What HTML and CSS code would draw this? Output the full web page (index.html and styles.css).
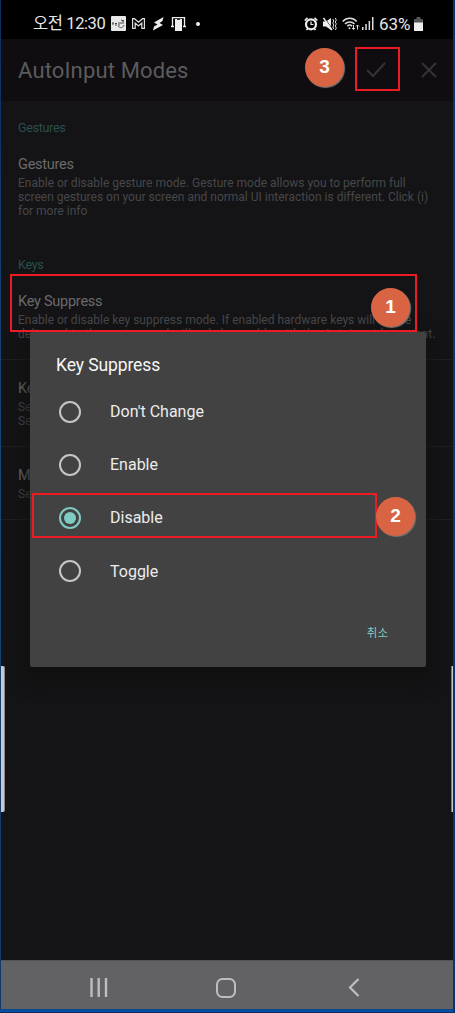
FILE: index.html
```html
<!DOCTYPE html>
<html lang="ko">
<head>
  <meta charset="UTF-8">
  <meta name="viewport" content="width=device-width, initial-scale=1.0">
  <title>AutoInput Modes</title>
  <link rel="stylesheet" href="styles.css">
</head>
<body>
  <div class="phone">
    <header class="status-bar">
      <span class="clock">오전 12:30</span>
      <svg class="icon-card" width="15" height="15" viewBox="0 0 15 15">
        <rect width="15" height="15" rx="1" fill="#e8e8e8"/>
        <path d="M1 7h2M2 7v2M4 7.500h2M4 9h2M7 7h2M7 9h2M10 6v2M12 4v4M10 4l3 1" stroke="#444" fill="none"/>
        <path d="M7 10c2 2.500 5 2 6-1" stroke="#555" fill="none"/>
      </svg>
      <svg class="icon-mail" width="13" height="11" viewBox="0 0 13 11" fill="none" stroke="#ddd" stroke-width="1.200">
        <path d="M.6 10.400V.700h1.900l4 3.600 4-3.600h1.900v9.700H9.800V5L6.500 7.900 3.200 5v5.400z"/>
      </svg>
      <svg class="icon-bolt" width="11" height="14" viewBox="0 0 11 14" fill="#eee">
        <path d="M10.500 0 1 5.500 4.500 7.500 1 9.500 0 13.500 10 8 6.500 6 9.500 4z"/>
      </svg>
      <svg class="icon-device" width="15" height="14" viewBox="0 0 15 14">
        <path d="M1.500 9V.700h12V9M0 9.500h3M12 9.500h3" stroke="#eee" stroke-width="1.300" fill="none"/>
        <path d="M4 2h7v12H4z" fill="#eee"/>
        <path d="M6 2.500h3" stroke="#333"/>
      </svg>
      <span class="dot"></span>
      <div class="status-right">
        <svg class="icon-alarm" width="14" height="14" viewBox="0 0 14 14" fill="none" stroke="#eee">
          <circle cx="7" cy="7.300" r="5" stroke-width="2.200"/>
          <path d="M.7 3.500 3.500.8M13.300 3.500 10.500.8M2.500 13l1.300-1.500M11.500 13l-1.300-1.500" stroke-width="1.600"/>
          <path d="M7 4.500v3h2.500" stroke-width="1.200"/>
        </svg>
        <svg class="icon-mute" width="14" height="14" viewBox="0 0 14 14">
          <path d="M0 4.500h3L8 1v12L3 9.500H0z" fill="#eee"/>
          <path d="m1.500 1 8.500 12" stroke="#000" stroke-width="1"/>
          <path d="m.5 1 8.500 12" stroke="#eee" stroke-width="1.400"/>
          <path d="m9.800 2 1 2-1 2 1 2-1 2 1 2M12.300 1l1 2-1 2 1 2-1 2 1 2-1 2" stroke="#ddd" fill="none"/>
        </svg>
        <svg class="icon-wifi" width="18" height="14" viewBox="0 0 18 14" fill="none" stroke="#ddd" stroke-width="1.500">
          <path d="M.7 4.500C4.500.3 11 .3 14.700 4.500M3 7C5.500 4.200 10 4.200 12.500 7M5.300 9.300c1.500-1.600 3.300-1.600 4.800 0"/>
          <circle cx="7.500" cy="11.200" r="1" fill="#ddd" stroke="none"/>
          <path d="M11.500 8v4.500m-1.500-1.500 1.500 1.500L13 11M15.500 12.500V8M14 9.500 15.500 8 17 9.500" stroke-width="1"/>
        </svg>
        <svg class="icon-signal" width="12" height="13" viewBox="0 0 12 13" fill="#ddd">
          <path d="M0 10h1.500v3H0zM3.300 7h1.500v6H3.300zM6.600 4h1.500v9H6.600zM10 0h1.500v13H10z"/>
        </svg>
        <span class="percent">63%</span>
        <svg class="icon-battery" width="9" height="14" viewBox="0 0 9 14">
          <path d="M2.500 0h4v2H9v4H0V2h2.500z" fill="#555"/>
          <path d="M0 5.500h9V14H0z" fill="#eee"/>
        </svg>
      </div>
    </header>

    <div class="app-bar">
      <h1>AutoInput Modes</h1>
      <svg class="icon-check" width="20" height="16" viewBox="0 0 20 16" fill="none" stroke="#343336" stroke-width="2">
        <path d="m1 8 6 6L19 1"/>
      </svg>
      <svg class="icon-close" width="16" height="16" viewBox="0 0 16 16" fill="none" stroke="#343336" stroke-width="2">
        <path d="m1 1 14 14M15 1 1 15"/>
      </svg>
    </div>

    <main class="settings">
      <section class="group gestures">
        <h2>Gestures</h2>
        <div class="setting">
          <h3>Gestures</h3>
          <p>Enable or disable gesture mode. Gesture mode allows you to perform full</p>
          <p>screen gestures on your screen and normal UI interaction is different. Click (i)</p>
          <p>for more info</p>
        </div>
      </section>
      <section class="group keys">
        <h2>Keys</h2>
        <div class="setting lined">
          <h3>Key Suppress</h3>
          <p>Enable or disable key suppress mode. If enabled hardware keys will not be</p>
          <p class="spread">delivered to the system and will only be usable with the AutoInput key event.</p>
        </div>
        <div class="setting lined">
          <h3>Keys</h3>
          <p>Set</p>
          <p>Set</p>
        </div>
        <div class="setting lined">
          <h3>Mode</h3>
          <p>Set</p>
        </div>
      </section>
    </main>

    <nav class="nav-bar">
      <svg width="18" height="19" viewBox="0 0 18 19" stroke="#bebebe" stroke-width="2.400">
        <path d="M1.500 0v19M8.700 0v19M16 0v19"/>
      </svg>
      <svg class="icon-home" width="20" height="20" viewBox="0 0 20 20" fill="none" stroke="#bebebe" stroke-width="2">
        <rect x="1" y="1" width="18" height="18" rx="5.500"/>
      </svg>
      <svg width="12" height="19" viewBox="0 0 12 19" fill="none" stroke="#bebebe" stroke-width="2.200">
        <path d="M10.500 1 2 9.500l8.500 8.500"/>
      </svg>
    </nav>

    <div class="edge edge-left"></div>
    <div class="edge edge-right"></div>

    <div class="dialog">
      <h2>Key Suppress</h2>
      <ul>
        <li><span class="radio"></span>Don't Change</li>
        <li><span class="radio"></span>Enable</li>
        <li><span class="radio checked"></span>Disable</li>
        <li><span class="radio"></span>Toggle</li>
      </ul>
      <button class="cancel">취소</button>
    </div>

    <div class="mark mark-suppress"></div>
    <div class="mark mark-disable"></div>
    <div class="mark mark-check"></div>
    <div class="step step-one">1</div>
    <div class="step step-two">2</div>
    <div class="step step-three">3</div>
  </div>
</body>
</html>
```
FILE: styles.css
```css
* {
  box-sizing: border-box;
  margin: 0;
  padding: 0;
}
body {
  width: 455px;
  height: 1013px;
  padding: 0 0 4px 1px;
  overflow: hidden;
  background: linear-gradient(#0c2d5c 0, #123d70 25%, #164873 50%, #0f3a68 95%, #0f3a68 1009px, #0750a4 1010px, #0750a4 1012px, #082c5c 1012px);
  border-right: 2px solid #10316f;
  font-family: Roboto, "Noto Sans CJK KR", sans-serif;
}
h1, h2, h3 {
  font-weight: 400;
}
svg {
  flex: none;
  display: block;
}
.phone {
  position: relative;
  width: 452px;
  height: 1009px;
  display: flex;
  flex-direction: column;
  background: #141416;
}

/* status bar */
.status-bar {
  height: 39px;
  padding: 8px 30px 0 32px;
  display: flex;
  align-items: center;
  background: #000;
  color: #e6e6e6;
  font-size: 17px;
  white-space: nowrap;
}
.clock {
  width: 78px;
  font-size: 16.500px;
  line-height: 24px;
  letter-spacing: -0.400px;
}
.icon-mail {
  margin-left: 6px;
}
.icon-bolt {
  margin-left: 8px;
}
.icon-device {
  margin-left: 7px;
}
.dot {
  width: 4px;
  height: 4px;
  margin-left: 10px;
  border-radius: 50%;
  background: #eee;
}
.status-right {
  margin-left: auto;
  display: flex;
  align-items: center;
}
.icon-alarm {
  margin-right: 5px;
}
.icon-wifi {
  margin-left: 5px;
}
.icon-signal {
  margin-left: 2px;
}
.percent {
  width: 33px;
  margin-left: 5px;
  letter-spacing: -0.100px;
}
.icon-battery {
  margin-left: 2px;
}

/* title bar */
.app-bar {
  height: 62px;
  padding: 0 16px 0 17px;
  display: flex;
  align-items: center;
  background: #0f0d10;
}
.app-bar h1 {
  flex: 1;
  color: #5b5b5d;
  font-size: 22px;
  letter-spacing: 0.150px;
}
.icon-close {
  margin-left: 35px;
}

/* settings list */
.settings {
  flex: 1;
  white-space: nowrap;
}
.group {
  padding-top: 19px;
}
.gestures {
  height: 137px;
}
.group h2 {
  padding-left: 17px;
  color: #29504c;
  font-size: 12.500px;
  line-height: 16px;
  letter-spacing: -0.300px;
}
.setting {
  padding: 19px 0 17.600px 17px;
}
.group h2 + .setting {
  padding-top: 19px;
}
.lined {
  border-bottom: 1px solid #1f1f21;
}
.setting h3 {
  margin-bottom: 2px;
  color: #6a6a6b;
  font-size: 14.500px;
  line-height: 19px;
  letter-spacing: -0.250px;
}
.setting p {
  color: #474749;
  font-size: 12px;
  line-height: 14.200px;
}
.setting .spread {
  letter-spacing: 0.190px;
}

/* system navigation */
.nav-bar {
  height: 49px;
  padding: 5px 93px 0 89px;
  display: flex;
  align-items: center;
  justify-content: space-between;
  border-top: 1px solid #535254;
  background: #626163;
}
.icon-home {
  margin-right: 5px;
}

/* edge panel handles */
.edge {
  position: absolute;
  top: 666px;
  height: 146px;
  background: #cbc9cf;
}
.edge-left {
  left: 0;
  width: 4px;
  border-right: 1px solid #88868b;
  border-radius: 0 2px 2px 0;
}
.edge-right {
  right: 0;
  width: 2px;
  border-left: 1px solid #77757a;
}

/* dialog */
.dialog {
  position: absolute;
  left: 29px;
  top: 332px;
  width: 396px;
  height: 335px;
  padding-top: 21px;
  background: #424242;
  border-radius: 2px;
  box-shadow: 0 10px 18px 3px rgba(15, 15, 15, 0.8);
  color: #ececec;
}
.dialog h2 {
  padding-left: 26px;
  color: #f6f6f6;
  font-size: 17.500px;
  line-height: 24px;
  letter-spacing: -0.100px;
}
.dialog ul {
  margin-top: 8px;
  list-style: none;
}
.dialog li {
  height: 53.200px;
  padding-left: 29px;
  display: flex;
  align-items: center;
  font-size: 16px;
}
.radio {
  width: 22px;
  height: 22px;
  margin-right: 29px;
  display: grid;
  place-items: center;
  border: 2px solid #c6c6c6;
  border-radius: 50%;
}
.radio.checked {
  border-color: #80cbc4;
}
.radio.checked::after {
  content: "";
  width: 12px;
  height: 12px;
  border-radius: 50%;
  background: #80cbc4;
}
.cancel {
  margin: 24px 38px 0 auto;
  display: block;
  border: 0;
  background: none;
  color: #80cbc4;
  font: 11.500px/20px "Noto Sans CJK KR", sans-serif;
}

/* step annotations */
.mark {
  position: absolute;
  border: 2px solid #ed1c24;
}
.mark-suppress {
  left: 9px;
  top: 274px;
  width: 407px;
  height: 58px;
}
.mark-disable {
  left: 31px;
  top: 493px;
  width: 345px;
  height: 45px;
}
.mark-check {
  left: 354px;
  top: 47px;
  width: 45px;
  height: 44px;
}
.step {
  position: absolute;
  width: 39px;
  height: 39px;
  border-radius: 50%;
  background: #d96444;
  box-shadow: 1px 1px 1px #777;
  color: #fff;
  font: bold 19px/37px "Liberation Sans", sans-serif;
  text-align: center;
}
.step-one {
  left: 370px;
  top: 288px;
}
.step-two {
  left: 375px;
  top: 497px;
}
.step-three {
  left: 304px;
  top: 48px;
}
```
